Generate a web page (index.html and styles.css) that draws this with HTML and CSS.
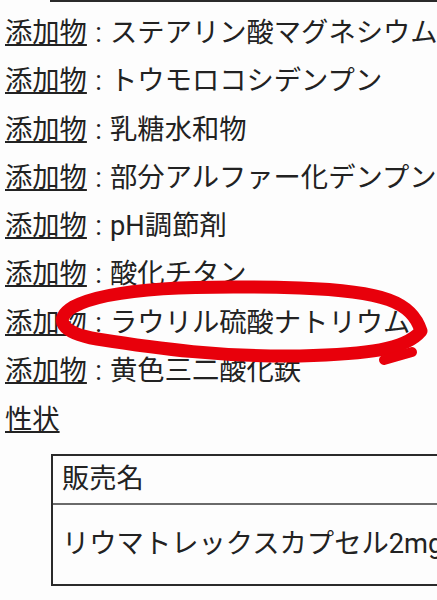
FILE: index.html
```html
<!DOCTYPE html>
<html lang="ja">
<head>
<meta charset="utf-8">
<title>添加物</title>
<link rel="stylesheet" href="styles.css">
</head>
<body>
<div class="page">
  <div class="prev-table"><div class="cell"></div><div class="cell cell-right"></div></div>
  <ul class="list">
    <li><a class="term">添加物</a> : ステアリン酸マグネシウム</li>
    <li><a class="term">添加物</a> : トウモロコシデンプン</li>
    <li><a class="term">添加物</a> : 乳糖水和物</li>
    <li><a class="term">添加物</a> : 部分アルファー化デンプン</li>
    <li><a class="term">添加物</a> : pH調節剤</li>
    <li><a class="term">添加物</a> : 酸化チタン</li>
    <li><a class="term">添加物</a> : ラウリル硫酸ナトリウム</li>
    <li><a class="term">添加物</a> : 黄色三二酸化鉄</li>
  </ul>
  <p class="heading"><a class="term">性状</a></p>
  <div class="spec">
    <div class="spec-head">販売名</div>
    <div class="spec-body">リウマトレックスカプセル2mg</div>
  </div>
  <svg class="mark" width="437" height="600" viewBox="0 0 437 600">
    <path d="M421 331 C412 302 384 291 300 288 C200 285 110 287 73 307 C53 319 61 333 97 339 C160 349 222 357 300 356 C368 354 405 350 421 331" fill="none" stroke="#e8000b" stroke-width="13" stroke-linecap="round" stroke-linejoin="round"/>
    <path d="M384 360 L412 352" fill="none" stroke="#e8000b" stroke-width="10" stroke-linecap="round"/>
  </svg>
</div>
</body>
</html>
```
FILE: styles.css
```css
html, body {
  margin: 0;
  padding: 0;
  background: #fdfdfd;
  overflow: hidden;
}

.page {
  position: relative;
  width: 437px;
  height: 600px;
  overflow: hidden;
  font-family: Roboto, "Noto Sans CJK JP", sans-serif;
  font-size: 27.3px;
  color: #222;
}

.prev-table {
  margin-left: 50px;
  width: 440px;
  display: grid;
  grid-template-columns: 186px 1fr;
  border-bottom: 2px solid #2a2a2a;
}

.cell {
  height: 0;
}

.cell-right {
  border-left: 2px solid #2a2a2a;
}

.list {
  list-style: none;
  margin: 0;
  padding: 7px 0 0 5px;
}

.list li {
  line-height: 48.3px;
  white-space: nowrap;
  word-spacing: 1.5px;
}

.term {
  color: inherit;
  text-decoration: underline;
  text-decoration-thickness: 1.5px;
  text-underline-offset: 2px;
}

.heading {
  margin: 0;
  padding-left: 5px;
  line-height: 50px;
}

.spec {
  margin: 9px 0 0 51px;
  width: 460px;
  border: 2px solid #2a2a2a;
  white-space: nowrap;
}

.spec-head {
  height: 47px;
  line-height: 46px;
  padding-left: 9px;
  border-bottom: 2px solid #6a6a6a;
}

.spec-body {
  height: 79px;
  line-height: 78px;
  padding-left: 9px;
}

.mark {
  position: absolute;
  left: 0;
  top: 0;
  pointer-events: none;
}
```
